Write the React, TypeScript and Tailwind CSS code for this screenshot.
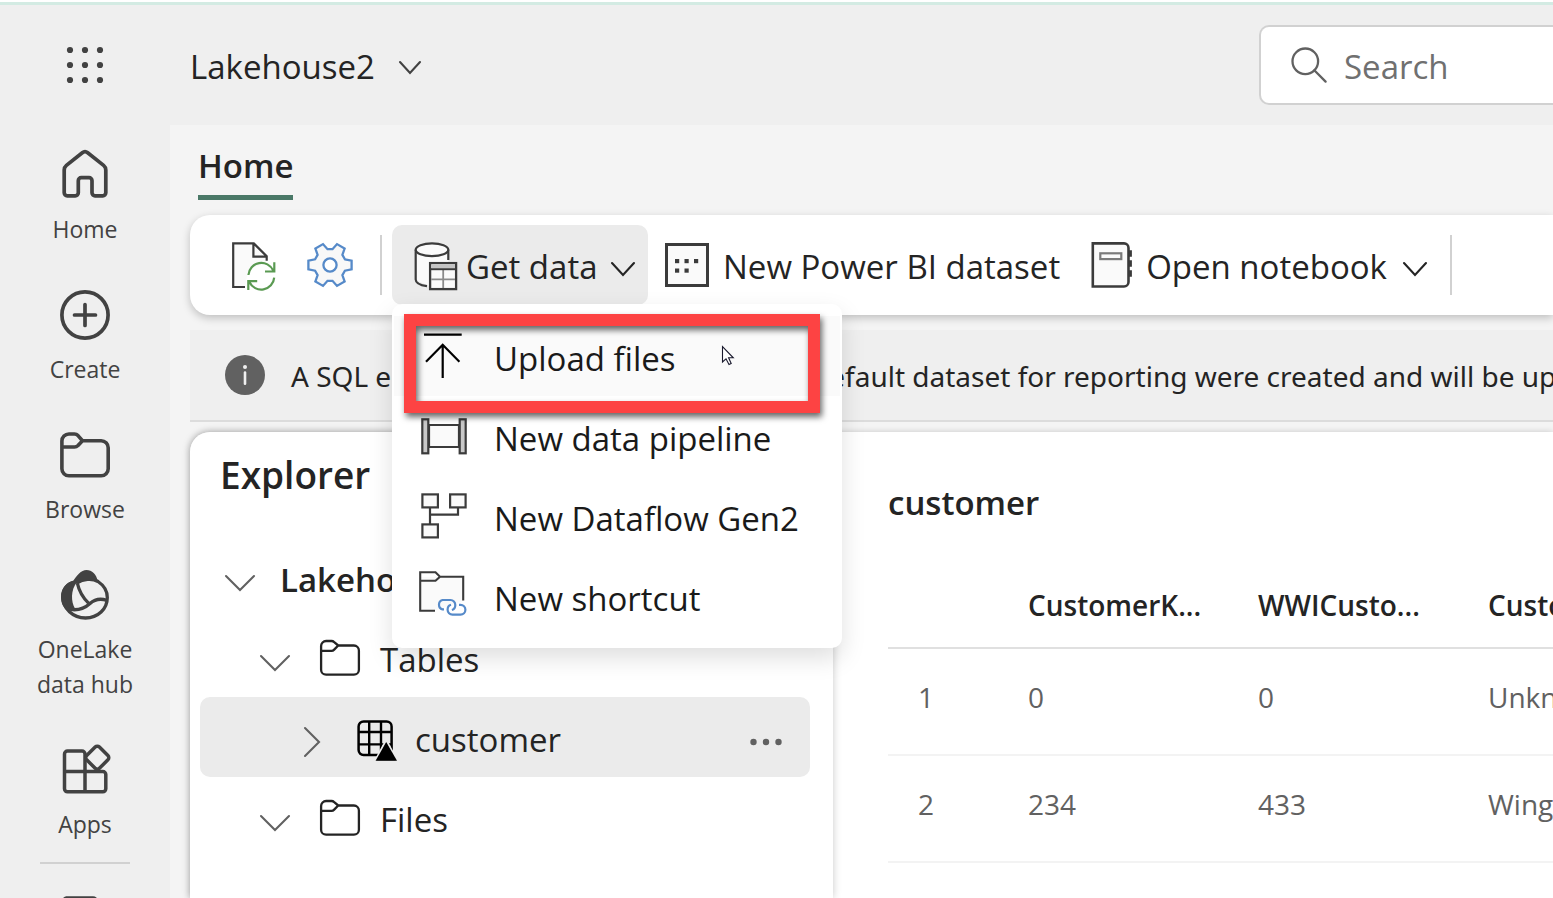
import React from "react";

type IconProps = { w: number; h: number; className?: string; children: React.ReactNode };

function Icon({ w, h, className = "", children }: IconProps) {
  return (
    <svg
      width={w}
      height={h}
      viewBox={`0 0 ${w} ${h}`}
      fill="none"
      stroke="currentColor"
      aria-hidden="true"
      className={`shrink-0 overflow-visible ${className}`}
    >
      {children}
    </svg>
  );
}

function ChevronDown({ w, h, className = "" }: { w: number; h: number; className?: string }) {
  return (
    <Icon w={w} h={h} className={className}>
      <path d={`M1 1 L${w / 2} ${h - 1} L${w - 1} 1`} strokeWidth="2.1" strokeLinecap="round" />
    </Icon>
  );
}

function Waffle() {
  const at = [4, 19, 34];
  return (
    <Icon w={38} h={38} className="text-[#424242]">
      {at.map((y) => at.map((x) => <circle key={`${x}-${y}`} cx={x} cy={y} r="3.1" fill="currentColor" stroke="none" />))}
    </Icon>
  );
}

function HomeIcon() {
  return (
    <Icon w={50} h={50}>
      <path
        strokeWidth="3.7"
        strokeLinejoin="round"
        d="M22.3 2.8 a4.3 4.3 0 0 1 5.4 0 L43.6 15.4 Q45.8 17.2 45.8 20 V42.8 a3 3 0 0 1 -3 3 H35 a3 3 0 0 1 -3 -3 V30.7 a3 3 0 0 0 -3 -3 H21.3 a3 3 0 0 0 -3 3 V42.8 a3 3 0 0 1 -3 3 H7.2 a3 3 0 0 1 -3 -3 V20 Q4.2 17.2 6.4 15.4 Z"
      />
    </Icon>
  );
}

function CreateIcon() {
  return (
    <Icon w={50} h={50}>
      <circle cx="25" cy="25" r="23.1" strokeWidth="3.7" />
      <path d="M25 14.5 V35.5 M14.5 25 H35.5" strokeWidth="3.7" strokeLinecap="round" />
    </Icon>
  );
}

function BrowseIcon() {
  return (
    <Icon w={50} h={50}>
      <path
        strokeWidth="3.6"
        strokeLinejoin="round"
        d="M1.9 17 V11 a7 7 0 0 1 7 -7 H14.5 Q16.5 4 18 5.6 L22.5 10.7 H41.2 a7 7 0 0 1 7 7 V38.8 a7 7 0 0 1 -7 7 H8.9 a7 7 0 0 1 -7 -7 V17 H14.5 Q16.5 17 18 15.5 L22.5 10.7"
      />
    </Icon>
  );
}

function OneLakeIcon() {
  return (
    <Icon w={50} h={50}>
      <path
        strokeWidth="3.3"
        d="M17 12.8 C23 9 32 7.8 38 11.5 C44 15.5 47.3 21 47.3 27.5 C47.3 39 38 48 25.5 48 C13 48 2.8 38.5 2.8 26.5 C2.8 20 7 14 14 12"
      />
      <path fill="currentColor" stroke="none" d="M12.5 12 C17 5 21 0 26.5 0 C32 0 36.5 4.5 37.5 10.5 C31 9.5 24 9.5 18 13.5 Z" />
      <path fill="currentColor" stroke="none" d="M14.5 10.8 C7 11.5 1 18 1 27 C1 33 3 37 7 40.5 L15 38.5 C11 32 10.5 20 17 12 Z" />
      <path strokeWidth="3.3" d="M17.3 13 C19 21 23 28 29 33.6 M8 39 C17 41 24 39 30 33.5 C35 29 40 28 47 30.5" />
    </Icon>
  );
}

function AppsIcon() {
  return (
    <Icon w={50} h={50}>
      <g strokeWidth="3.5">
        <path d="M4.5 26.5 V9 a3 3 0 0 1 3 -3 H22 a3 3 0 0 1 3 3 V47.5 M4.5 26.5 H42.8 a3 3 0 0 1 3 3 V43.8 a3 3 0 0 1 -3 3 H7.5 a3 3 0 0 1 -3 -3 Z" />
        <rect x="28.3" y="3.7" width="18" height="18" rx="3" transform="rotate(45 37.3 12.7)" className="fill-[#efefef]" />
      </g>
    </Icon>
  );
}

function MonitorIcon() {
  return (
    <Icon w={50} h={50}>
      <path d="M6 2 H33 a3 3 0 0 1 3 3 V40 a3 3 0 0 1 -3 3 H7 a3 3 0 0 1 -3 -3 V5 a3 3 0 0 1 3 -3" strokeWidth="3.6" />
    </Icon>
  );
}

function RefreshDocIcon() {
  return (
    <Icon w={50} h={50}>
      <path fill="#fafafa" stroke="none" d="M5 3.5 H25.5 L38.7 16.7 V22 L20 30 L17 47 H5 Z" />
      <path strokeWidth="2.2" d="M17 47 H5.2 V3.4 H25.8 L38.7 16.3 V20.7 M25.4 3.4 V16.7 H38.7" />
      <g stroke="#5a9a52" strokeWidth="2.2">
        <path d="M20.4 35 A13 13 0 0 1 45.2 30.5 M46.3 22.3 V31.5 H37" />
        <path d="M46.2 37.6 A13 13 0 0 1 21.4 42 M29.2 41.2 H20.3 V50" />
      </g>
    </Icon>
  );
}

function gearPath(cx: number, cy: number) {
  const steps: [number, number][] = [
    [-21, 16],
    [-11.5, 22],
    [11.5, 22],
    [21, 16],
  ];
  const pts: string[] = [];
  for (let tooth = 0; tooth < 6; tooth++) {
    for (const [offset, r] of steps) {
      const a = ((tooth * 60 + offset) * Math.PI) / 180;
      pts.push(`${(cx + r * Math.cos(a)).toFixed(1)} ${(cy + r * Math.sin(a)).toFixed(1)}`);
    }
  }
  return `M${pts.join(" L")} Z`;
}

function GearIcon() {
  return (
    <Icon w={48} h={48}>
      <path d={gearPath(24, 24)} fill="#f8f8f8" stroke="#568ac9" strokeWidth="2.3" />
      <circle cx="24" cy="24" r="6.6" fill="#ffffff" stroke="#568ac9" strokeWidth="2.3" />
    </Icon>
  );
}

function DatabaseTableIcon() {
  return (
    <Icon w={48} h={50}>
      <path fill="#fafafa" stroke="none" d="M3.7 9.8 H36.3 V22 H17 V46 L3.7 40 Z" />
      <ellipse cx="20" cy="9.8" rx="16.3" ry="6.4" fill="#fafafa" strokeWidth="2.2" />
      <path strokeWidth="2.2" d="M3.7 9.8 V39.5 C3.7 43 8.5 45.3 15 46.2 M36.3 9.8 V20" />
      <rect x="18.1" y="23.1" width="26" height="26" fill="#fafafa" strokeWidth="2.3" />
      <rect x="19.2" y="24.6" width="23.8" height="3.4" fill="#c4c4c4" stroke="none" />
      <path stroke="#8a8a8a" strokeWidth="1.8" d="M31.2 30 V48 M19.2 39.3 H43" />
      <path strokeWidth="2" d="M18 29.2 H44" />
    </Icon>
  );
}

function DatasetIcon() {
  const dots: [number, number][] = [
    [10, 16],
    [19.5, 16],
    [29, 16],
    [10, 25.5],
    [19.5, 25.5],
  ];
  return (
    <Icon w={44} h={44}>
      <rect x="1.5" y="1.5" width="41" height="41" fill="#fafafa" strokeWidth="3" />
      {dots.map(([x, y]) => (
        <rect key={`${x}-${y}`} x={x} y={y} width="4.2" height="4.2" fill="currentColor" stroke="none" />
      ))}
    </Icon>
  );
}

function NotebookIcon() {
  return (
    <Icon w={42} h={50}>
      <path d="M2.8 3.4 H34 a4.5 4.5 0 0 1 4.5 4.5 V42 a4.5 4.5 0 0 1 -4.5 4.5 H2.8 Z" fill="#fafafa" strokeWidth="2.6" />
      <rect x="10.3" y="13.3" width="21" height="5.8" stroke="#7a7a7a" strokeWidth="2.2" />
      <path d="M38.5 10.3 h3.4 v6.4 h-3.4 Z M38.5 20.2 h3.4 v6.6 h-3.4 Z M38.5 30.3 h3.4 v6.4 h-3.4 Z" fill="currentColor" stroke="none" />
    </Icon>
  );
}

function UploadIcon() {
  return (
    <Icon w={48} h={48} className="text-black">
      <path d="M4 2.7 H41.7 M22.7 13 V46 M6 29.7 L22.7 12.8 L39.4 29.7" strokeWidth="2.2" />
    </Icon>
  );
}

function PipelineIcon() {
  return (
    <Icon w={48} h={48}>
      <path d="M9 13 H39 V35 H9 Z" fill="#fafafa" strokeWidth="2.2" />
      <rect x="2.3" y="7.3" width="6" height="34" fill="#c8c8c8" strokeWidth="2.2" />
      <rect x="39.7" y="7.3" width="6" height="34" fill="#c8c8c8" strokeWidth="2.2" />
    </Icon>
  );
}

function DataflowIcon() {
  return (
    <Icon w={48} h={48}>
      <g strokeWidth="2.2" fill="#fafafa">
        <path d="M10 15 V32 M10 22.7 H38 V15" fill="none" />
        <rect x="2.4" y="2.4" width="15.5" height="13" />
        <rect x="30.1" y="2.4" width="15.5" height="13" />
        <rect x="2.4" y="32.4" width="15.5" height="13" />
      </g>
    </Icon>
  );
}

function ShortcutIcon() {
  return (
    <Icon w={48} h={48}>
      <path fill="#fafafa" stroke="none" d="M0 5 H43 V29 L17 38 H0 Z" />
      <path strokeWidth="2.1" d="M15 38.7 H0.2 V0.2 H15.5 L20 4.7 H43.2 V28.5 M0.2 8.8 H15.5 L20 4.7" />
      <g stroke="#568ac9" strokeWidth="2.2">
        <path d="M24 37.4 h-1.5 a4.9 4.9 0 0 1 0 -9.4 h8 a4.9 4.9 0 0 1 4.8 5 q0 4 -3.4 5" />
        <path d="M39 32.8 h1.5 a4.9 4.9 0 0 1 0 9.8 h-8 a4.9 4.9 0 0 1 -4.9 -4.9 q0 -4 3.4 -4.9" />
      </g>
    </Icon>
  );
}

function TreeFolderIcon() {
  return (
    <Icon w={40} h={36} className="text-[#242424]">
      <path
        strokeWidth="2.3"
        strokeLinejoin="round"
        d="M1.1 10.8 V6 a5 5 0 0 1 5 -5 H11.5 Q13 1 14.2 2.1 L18.2 5.5 H33.9 a5 5 0 0 1 5 5 V29.7 a5 5 0 0 1 -5 5 H6.1 a5 5 0 0 1 -5 -5 V10.8 H11.5 Q13 10.8 14.2 9.6 L18.2 5.5"
      />
    </Icon>
  );
}

function DeltaTableIcon() {
  return (
    <Icon w={40} h={42} className="text-black">
      <rect x="1.6" y="1.5" width="33" height="33.5" rx="5" strokeWidth="2.5" />
      <path strokeWidth="2.4" d="M12.2 1.5 V35 M24 1.5 V35 M1.6 12 H34.6 M1.6 24.4 H34.6" />
      <path d="M29.2 20.5 L40.4 41.5 H18 Z" fill="currentColor" stroke="#ebebeb" strokeWidth="2.4" />
      <path d="M29.2 22 L40 40.8 H18.6 Z" fill="currentColor" stroke="none" />
    </Icon>
  );
}

function InfoIcon() {
  return (
    <Icon w={40} h={40}>
      <circle cx="20" cy="20" r="20" fill="#616161" stroke="none" />
      <circle cx="20" cy="12" r="2" fill="#f0f0f0" stroke="none" />
      <path d="M20 17.5 V28.8" stroke="#f0f0f0" strokeWidth="2.6" strokeLinecap="round" />
    </Icon>
  );
}

function SearchIcon() {
  return (
    <Icon w={36} h={36} className="text-[#616161]">
      <circle cx="14.3" cy="14.3" r="12.8" strokeWidth="2.3" />
      <path d="M23.3 23.3 L34.6 34.6" strokeWidth="2.3" strokeLinecap="round" />
    </Icon>
  );
}

function Pointer() {
  return (
    <svg width="14" height="22" viewBox="0 0 14 22" aria-hidden="true" className="absolute top-[41px] left-[329px]">
      <path
        d="M1.5 1.5 V17 L5 13.8 L8 19.6 L10.2 18.4 L7.6 12.8 H12.3 Z"
        fill="#ffffff"
        stroke="#1a1a2e"
        strokeWidth="1.1"
      />
    </svg>
  );
}

const navItems = [
  { label: "Home", icon: <HomeIcon /> },
  { label: "Create", icon: <CreateIcon /> },
  { label: "Browse", icon: <BrowseIcon /> },
  { label: "OneLake data hub", icon: <OneLakeIcon /> },
  { label: "Apps", icon: <AppsIcon /> },
];

const menuItems = [
  { label: "Upload files", icon: <UploadIcon /> },
  { label: "New data pipeline", icon: <PipelineIcon /> },
  { label: "New Dataflow Gen2", icon: <DataflowIcon /> },
  { label: "New shortcut", icon: <ShortcutIcon /> },
];

const columns = ["CustomerK...", "WWICusto...", "Customer"];
const rows = [
  ["0", "0", "Unknown"],
  ["234", "433", "Wingtip Toys"],
];

function Sidebar() {
  return (
    <aside className="flex w-[170px] shrink-0 flex-col items-center text-[#424242]">
      <button
        type="button"
        aria-label="App launcher"
        className="flex h-[120px] w-full shrink-0 items-center justify-center"
      >
        <Waffle />
      </button>
      <nav className="mt-[25px] flex shrink-0 flex-col items-center gap-[43px]">
        {navItems.map((item) => (
          <a key={item.label} href="#" className="flex w-[110px] flex-col items-center gap-3 text-center text-[23px] leading-[35px]">
            {item.icon}
            <span>{item.label}</span>
          </a>
        ))}
      </nav>
      <hr className="mt-5 h-[2px] w-[90px] shrink-0 border-0 bg-[#d1d1d1]" />
      <a href="#" aria-label="Workspaces" className="mt-8 shrink-0">
        <MonitorIcon />
      </a>
    </aside>
  );
}

function GetDataMenu() {
  return (
    <div
      role="menu"
      className="absolute top-full left-0 z-20 -mt-px w-[450px] rounded-[10px] bg-white px-[2px] py-3 shadow-[0_10px_24px_rgba(0,0,0,0.13)]"
    >
      {menuItems.map((item, i) => (
        <button
          key={item.label}
          type="button"
          role="menuitem"
          className={`flex h-20 w-full items-center gap-[26px] pl-[26px] text-left text-[#1a1a1a] ${i === 0 ? "bg-[#fafafa]" : ""}`}
        >
          <span className="text-[#3b3b3b]">{item.icon}</span>
          <span className="pt-[6px]">{item.label}</span>
        </button>
      ))}
      <div className="absolute top-[10px] left-3 h-[99px] w-[416px] border-12 border-[#fd4343] drop-shadow-[2px_4px_3px_rgba(0,0,0,0.6)]" />
      <Pointer />
    </div>
  );
}

function Toolbar() {
  return (
    <div
      role="toolbar"
      className="relative z-10 flex h-[100px] shrink-0 items-center rounded-l-[20px] bg-white pl-[38px] text-[33px] whitespace-nowrap text-[#242424] shadow-[0_3px_8px_rgba(0,0,0,0.22)]"
    >
      <button type="button" aria-label="Refresh" className="text-[#3b3b3b]">
        <RefreshDocIcon />
      </button>
      <button type="button" aria-label="Settings" className="ml-7">
        <GearIcon />
      </button>
      <div className="ml-[26px] h-[60px] w-[2px] bg-[#d1d1d1]" />
      <div className="relative ml-[10px]">
        <button type="button" aria-haspopup="menu" aria-expanded="true" className="flex h-20 w-64 items-center rounded-[10px] bg-[#ebebeb] pl-5">
          <span className="text-[#3b3b3b]">
            <DatabaseTableIcon />
          </span>
          <span className="ml-[6px] pt-1">Get data</span>
          <ChevronDown w={24} h={14} className="mt-2 ml-[14px]" />
        </button>
        <GetDataMenu />
      </div>
      <button type="button" className="ml-[17px] flex h-20 items-center gap-[14px]">
        <span className="text-[#3b3b3b]">
          <DatasetIcon />
        </span>
        <span className="pt-1">New Power BI dataset</span>
      </button>
      <button type="button" className="ml-[30px] flex h-20 items-center gap-[14px]">
        <span className="text-[#3b3b3b]">
          <NotebookIcon />
        </span>
        <span className="pt-1">Open notebook</span>
        <ChevronDown w={24} h={14} className="mt-2 ml-[2px]" />
      </button>
      <div className="ml-[23px] h-[60px] w-[2px] bg-[#d1d1d1]" />
    </div>
  );
}

function Explorer() {
  return (
    <section className="z-1 w-[643px] shrink-0 rounded-tl-[20px] bg-white pr-[23px] pl-[10px] text-[33px] text-[#242424] shadow-[0_0_8px_rgba(0,0,0,0.22)]">
      <h2 className="flex h-[105px] items-start pt-[17px] pl-5 text-[37px] leading-[52px] font-semibold">Explorer</h2>
      <ul>
        <li className="flex h-20 items-center pl-[25px]">
          <ChevronDown w={30} h={16} className="mt-3 text-[#616161]" />
          <span className="ml-[25px] pt-[6px] font-semibold">Lakehouse2</span>
        </li>
        <li className="flex h-20 items-center pl-[60px]">
          <ChevronDown w={30} h={16} className="mt-3 text-[#616161]" />
          <span className="mt-[2px] ml-[30px]">
            <TreeFolderIcon />
          </span>
          <span className="ml-5 pt-[6px]">Tables</span>
        </li>
        <li className="flex h-20 items-center rounded-[10px] bg-[#ebebeb] pr-7 pl-[104px]">
          <Icon w={16} h={30} className="mt-[10px] text-[#616161]">
            <path d="M1 1 L15 15 L1 29" strokeWidth="2.1" strokeLinecap="round" />
          </Icon>
          <span className="mt-2 ml-[37px]">
            <DeltaTableIcon />
          </span>
          <span className="ml-[18px] pt-[6px]">customer</span>
          <button type="button" aria-label="More options" className="mt-[10px] ml-auto text-[#616161]">
            <Icon w={32} h={8}>
              <path d="M3.5 4 h0 M16 4 h0 M28.5 4 h0" strokeWidth="6.4" strokeLinecap="round" />
            </Icon>
          </button>
        </li>
        <li className="flex h-20 items-center pl-[60px]">
          <ChevronDown w={30} h={16} className="mt-3 text-[#616161]" />
          <span className="mt-[2px] ml-[30px]">
            <TreeFolderIcon />
          </span>
          <span className="ml-5 pt-[6px]">Files</span>
        </li>
      </ul>
    </section>
  );
}

function Preview() {
  return (
    <section className="min-w-0 flex-1 overflow-hidden pl-[55px] text-[#242424]">
      <h2 className="mt-[46px] text-[33px] leading-[50px] font-semibold">customer</h2>
      <table className="mt-[35px] w-[800px] table-fixed text-left text-[28px] whitespace-nowrap">
        <thead>
          <tr className="h-[85px] border-b-2 border-[#e0e0e0]">
            <th className="w-[110px]" />
            {columns.map((c) => (
              <th key={c} className="w-[230px] pl-[30px] font-semibold">
                {c}
              </th>
            ))}
          </tr>
        </thead>
        <tbody className="text-[#616161]">
          {rows.map((r, i) => (
            <tr key={i} className="h-[107px] border-b-2 border-[#f3f3f3]">
              <td className="pb-[10px] pl-[30px]">{i + 1}</td>
              {r.map((v, j) => (
                <td key={j} className="pb-[10px] pl-[30px]">
                  {v}
                </td>
              ))}
            </tr>
          ))}
        </tbody>
      </table>
    </section>
  );
}

export default function App() {
  return (
    <div className="flex h-screen flex-col overflow-hidden bg-[#efefef] font-['Open_Sans','Noto_Sans',sans-serif] leading-normal">
      <div className="h-[5px] shrink-0 border-t-2 border-white bg-[#d3ebe3]" />
      <div className="flex min-h-0 flex-1">
        <Sidebar />
        <div className="flex min-w-0 flex-1 flex-col">
          <header className="flex h-[120px] shrink-0 items-center pl-5 text-[33px]">
            <button type="button" className="flex items-center gap-6 pt-1 text-[#242424]">
              Lakehouse2
              <ChevronDown w={22} h={13} className="text-[#424242]" />
            </button>
            <label className="ml-auto flex h-20 w-[294px] items-center gap-[17px] rounded-l-[10px] border-2 border-r-0 border-[#d1d1d1] bg-white pl-[30px]">
              <SearchIcon />
              <input
                type="search"
                aria-label="Search"
                placeholder="Search"
                className="w-full min-w-0 bg-transparent pt-1 outline-none placeholder:text-[#707070]"
              />
            </label>
          </header>
          <main className="flex min-h-0 flex-1 flex-col bg-[#f4f4f4] pl-5">
            <div role="tablist" className="flex h-[90px] shrink-0 items-start pl-2">
              <button
                type="button"
                role="tab"
                aria-selected="true"
                className="mt-4 h-[59px] border-b-5 border-[#4a7867] pb-1 text-[33px] leading-[50px] font-semibold text-[#242424]"
              >
                Home
              </button>
            </div>
            <Toolbar />
            <div className="mt-[15px] flex h-[92px] shrink-0 items-center gap-[26px] border-b-2 border-[#dcdcdc] bg-[#efefef] pl-[35px] font-['Noto_Sans','Open_Sans',sans-serif] text-[28px] whitespace-nowrap text-[#242424]">
              <InfoIcon />
              <p className="pt-[2px]">
                A SQL endpoint for SQL querying and a default dataset for reporting were created and will be updated with any
                tables added to the lakehouse.
              </p>
            </div>
            <div className="mt-[10px] flex min-h-0 flex-1 rounded-tl-[20px] bg-white shadow-[0_0_6px_rgba(0,0,0,0.18)]">
              <Explorer />
              <Preview />
            </div>
          </main>
        </div>
      </div>
    </div>
  );
}
